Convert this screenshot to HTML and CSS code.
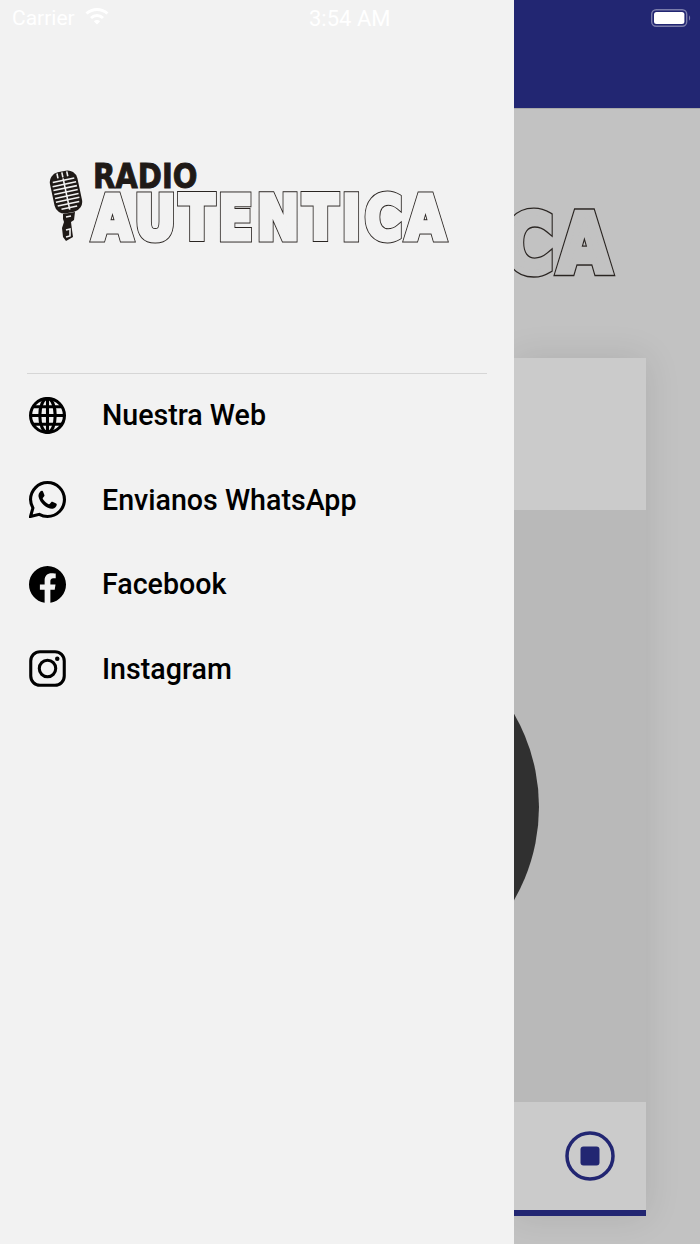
FILE: index.html
```html
<!DOCTYPE html>
<html lang="en">
<head>
  <meta charset="UTF-8" />
  <title>Radio Autentica</title>
  <meta name="viewport" content="width=device-width, initial-scale=1" />
  <link rel="stylesheet" href="styles.css">
</head>
<body>

<div class="screen">

  <!-- Status bar sits on top of drawer and player -->
  <div class="status-bar">
    <div class="status-left">
      <span>Carrier</span>
      <svg class="wifi" viewBox="0 0 24 18" width="24" height="18">
        <path d="M1.5 6.5C7.5 1 16.500 1 22.500 6.500" />
        <path d="M6 11C9.500 7.800 14.500 7.800 18 11" />
        <path class="wifi-dot" d="M12 17.500L8.800 14.200C10.600 12.700 13.400 12.700 15.200 14.200Z" />
      </svg>
    </div>
    <span class="status-time">3:54 AM</span>
    <svg class="battery" viewBox="0 0 40 18" width="40" height="18">
      <rect class="battery-shell" x="0.700" y="0.700" width="35" height="16.600" rx="4.500" />
      <rect class="battery-level" x="3" y="3" width="30.400" height="12" rx="2.500" />
      <path class="battery-nub" d="M38 6.500C39.500 7 39.500 11 38 11.500Z" />
    </svg>
  </div>

  <aside class="drawer">
    <div class="drawer-head">
      <div class="logo">
        <svg class="mic" viewBox="0 0 34 72" width="34" height="72">
          <g transform="rotate(-12 17 22)">
            <rect class="mic-head" x="3" y="1" width="28" height="42" rx="10" />
            <path class="mic-grill" d="M6 10H28M5 14H29M5 18H29M5 22H29M5 26H29M5 30H29M6 34H28M9 38H25" />
            <path class="mic-grill" d="M12 2V7M17 2V7M22 2V7" />
            <path class="mic-grill" d="M17 8V40" />
          </g>
          <path class="mic-fill" d="M14 44L26 42L25 50L22 52L23 60L24 67L17 71L14 67L13 58L15 52L14 49Z" />
          <path class="mic-grill" d="M17 60L21 59V66L17 67M17 47L22 46" />
        </svg>
        <div class="logo-text">
          <div class="logo-radio">RADIO</div>
          <div class="logo-word" data-word="AUTENTICA">AUTENTICA</div>
        </div>
      </div>
    </div>

    <nav class="drawer-menu">
      <a class="menu-item" href="#">
        <svg class="menu-icon" viewBox="0 0 36 36">
          <g class="line-icon">
            <circle cx="18" cy="18" r="16.500" />
            <ellipse cx="18" cy="18" rx="7.500" ry="16.500" />
            <path d="M18 1.500V34.500M1.500 18H34.500M4 9.500H32M4 26.500H32" />
          </g>
        </svg>
        Nuestra Web
      </a>
      <a class="menu-item" href="#">
        <svg class="menu-icon" viewBox="0 0 36 36">
          <path class="line-icon" d="M1.500 34.500L3.800 26.300C2.300 23.700 1.500 21 1.500 18C1.500 9 8.900 1.500 18 1.500C27.100 1.500 34.500 8.900 34.500 18C34.500 27.100 27.100 34.500 18 34.500C15.200 34.500 12.500 33.800 10 32.400Z" />
          <path d="M12.800 9.600C12.200 9.600 11.400 9.800 10.700 10.600C10 11.400 8.900 13 9.300 15.400C9.800 18.400 12.300 21.800 14.500 23.600C17.300 25.900 20.300 27.300 23 27C25.200 26.700 26.900 25 27 23.200C27 22.600 26.900 22.300 26.400 22L22.800 20.300C22.300 20.100 21.900 20.200 21.600 20.600L20.300 22.200C20 22.600 19.600 22.700 19.100 22.500C17 21.600 14.700 19.600 13.500 17.500C13.200 17 13.300 16.600 13.600 16.300L14.800 14.900C15.100 14.500 15.100 14.200 15 13.700L13.700 10.400C13.500 9.800 13.200 9.600 12.800 9.600Z" />
        </svg>
        Envianos WhatsApp
      </a>
      <a class="menu-item" href="#">
        <svg class="menu-icon" viewBox="0 0 36 36">
          <path d="M36 18C36 8.100 27.900 0 18 0C8.100 0 0 8.100 0 18C0 27 6.600 34.400 15.200 35.800V23.200H10.600V18H15.200V14C15.200 9.500 17.900 7 22 7C24 7 26 7.400 26 7.400V11.800H23.700C21.500 11.800 20.800 13.200 20.800 14.600V18H25.800L25 23.200H20.800V35.800C29.400 34.400 36 27 36 18Z" />
        </svg>
        Facebook
      </a>
      <a class="menu-item" href="#">
        <svg class="menu-icon" viewBox="0 0 36 36">
          <g class="line-icon">
            <rect x="1.700" y="1.700" width="32.600" height="32.600" rx="9" />
            <circle cx="18" cy="18" r="8" />
          </g>
          <circle cx="27.500" cy="8.500" r="2.200" />
        </svg>
        Instagram
      </a>
    </nav>
  </aside>

  <!-- Player pushed aside by the open drawer -->
  <main class="player">
    <div class="player-bar"></div>
    <div class="player-logo">
      <div class="logo-word logo-word-big" data-word="AUTENTICA">AUTENTICA</div>
    </div>
    <section class="player-card">
      <div class="card-head"></div>
      <div class="card-art">
        <div class="disc"></div>
      </div>
      <div class="card-controls">
        <svg class="stop-btn" viewBox="0 0 50 50" width="50" height="50">
          <circle cx="25" cy="25" r="23" />
          <rect x="15.500" y="15.500" width="19" height="19" rx="3" />
        </svg>
      </div>
    </section>
  </main>

</div>

</body>
</html>
```

FILE: styles.css
```css
body {
  margin: 0;
  font-family: Roboto, 'Liberation Sans', sans-serif;
  background: #c2c2c2;
}
.screen {
  position: relative;
  display: flex;
  width: 700px;
  height: 1244px;
  overflow: hidden;
}

/* Status bar */
.status-bar {
  position: absolute;
  top: 0; left: 0; right: 0;
  height: 36px;
  display: flex;
  justify-content: space-between;
  align-items: center;
  padding: 0 9px 0 12px;
  color: #fff;
  font-size: 21px;
}
.status-left {
  display: flex;
  align-items: center;
  gap: 10px;
}
.status-time {
  position: absolute;
  left: 309px;
  font-size: 22px;
}
.wifi {
  margin-top: -5px;
  fill: none;
  stroke: #fff;
  stroke-width: 3;
}
.wifi .wifi-dot {
  fill: #fff;
  stroke: none;
}
.battery-shell {
  fill: none;
  stroke: #fff;
  stroke-opacity: 0.4;
  stroke-width: 1.4;
}
.battery-level { fill: #fff; }
.battery-nub { fill: #fff; fill-opacity: 0.4; }

/* Drawer */
.drawer {
  flex: 0 0 514px;
  background: #f2f2f2;
  --logo-bg: #f2f2f2;
}
.drawer-head {
  height: 374px;
  margin: 0 27px;
  box-sizing: border-box;
  padding: 163px 0 0 22px;
  border-bottom: 1px solid #d6d6d6;
}
.logo {
  display: flex;
  gap: 7px;
}
.mic {
  margin-top: 7px;
  flex: none;
}
.mic-head, .mic-fill { fill: #1f1a17; }
.mic-grill {
  fill: none;
  stroke: #f2f2f2;
  stroke-width: 1.6;
}
.logo-radio {
  height: 28px;
  margin-left: 3px;
  font-family: 'DejaVu Sans', sans-serif;
  font-weight: bold;
  font-size: 33px;
  line-height: 27px;
  color: #1f1a17;
  -webkit-text-stroke: 1px #1f1a17;
  transform: scaleX(0.88);
  transform-origin: left center;
}

/* Outlined wordmark: dark stroke with a background coloured layer over it */
.logo-word {
  position: relative;
  width: 358px;
  height: 54px;
  font-family: 'DejaVu Sans', sans-serif;
  font-weight: bold;
  font-size: 60px;
  line-height: 54px;
  letter-spacing: 5px;
  white-space: nowrap;
  color: #2a2522;
  -webkit-text-stroke: 7px #2a2522;
  transform: scaleX(0.84);
  transform-origin: left center;
  margin-left: 3px;
}
.logo-word::after {
  content: attr(data-word);
  position: absolute;
  top: 0; left: 0;
  color: var(--logo-bg);
  -webkit-text-stroke: 5px var(--logo-bg);
}
.logo-word-big {
  flex: none;
  transform: scale(1.115, 1.327);
  transform-origin: left center;
  margin: 0 0 0 -371px;
}

.drawer-menu {
  display: flex;
  flex-direction: column;
  margin-top: -1px;
}
.menu-item {
  display: flex;
  align-items: center;
  gap: 36px;
  height: 84.500px;
  padding-left: 29px;
  color: #000;
  text-decoration: none;
  font-size: 28.600px;
  font-weight: 500;
}
.menu-icon {
  width: 37px;
  height: 37px;
  flex: none;
  fill: #000;
}
.line-icon {
  fill: none;
  stroke: #000;
  stroke-width: 3;
}

/* Player behind the drawer */
.player {
  flex: 1;
  min-width: 0;
  overflow: hidden;
  --logo-bg: #c2c2c2;
}
.player-bar {
  height: 108px;
  background: #222672;
  border-bottom: 1px solid #a9a9a9;
}
.player-logo {
  display: flex;
  align-items: center;
  height: 249px;
  box-sizing: border-box;
  padding-top: 20px;
}
.player-card {
  width: 132px;
  height: 858px;
  display: flex;
  flex-direction: column;
  box-shadow: 0 0 34px rgba(0,0,0,0.1);
  border-bottom: 6px solid #222672;
  box-sizing: border-box;
}
.card-head {
  height: 152px;
  background: #cbcbcb;
}
.card-art {
  height: 592px;
  background: #b9b9b9;
  display: flex;
  align-items: center;
  overflow: hidden;
}
.disc {
  flex: none;
  width: 372px;
  height: 372px;
  margin-left: -347px;
  margin-top: 2px;
  border-radius: 50%;
  background: #303030;
}
.card-controls {
  flex: 1;
  background: #cbcbcb;
  display: flex;
  align-items: center;
  justify-content: flex-end;
  padding-right: 31px;
}
.stop-btn {
  fill: none;
  stroke: #222672;
  stroke-width: 3.500;
}
.stop-btn rect {
  fill: #222672;
  stroke: none;
}
```
